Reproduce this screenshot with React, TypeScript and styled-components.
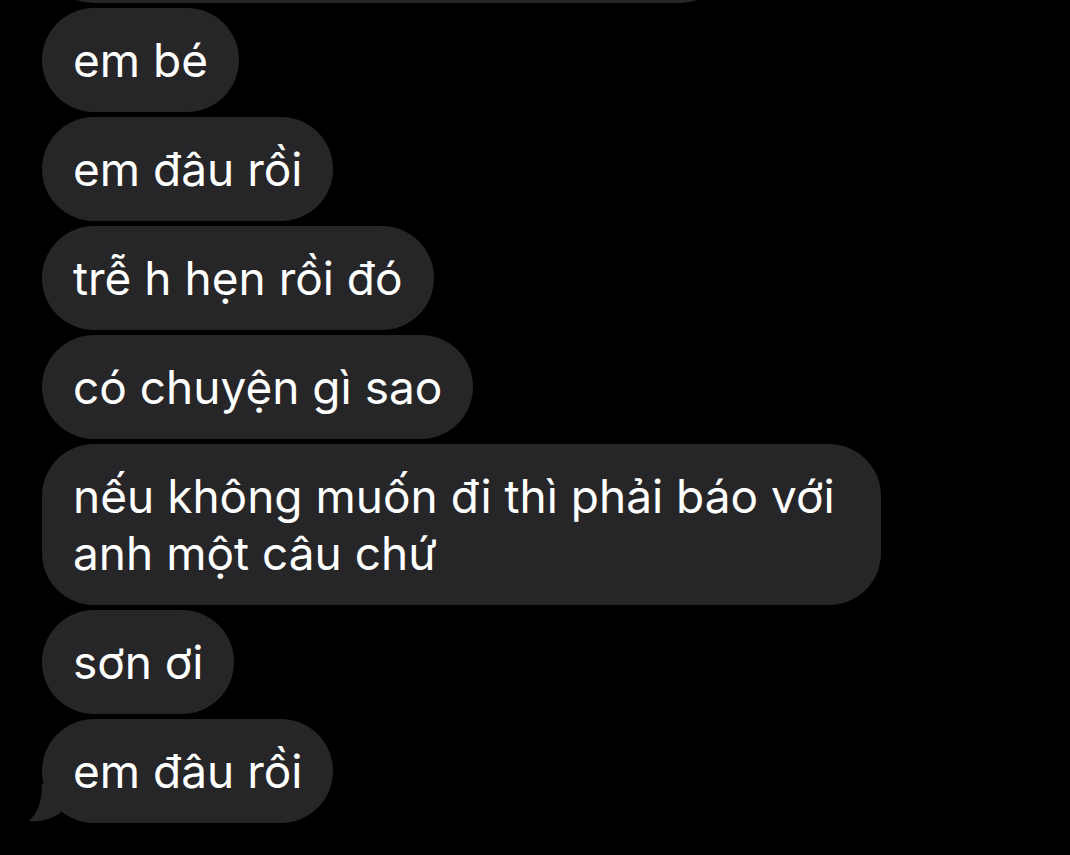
import styled, { createGlobalStyle } from "styled-components";

const GlobalStyle = createGlobalStyle`
    html, body {
        margin: 0;
        padding: 0;
        background: #000;
    }
    * {
        box-sizing: border-box;
    }
`

const messages = [
    "em bé",
    "em đâu rồi",
    "trễ h hẹn rồi đó",
    "có chuyện gì sao",
    "nếu không muốn đi thì phải báo với anh một câu chứ",
    "sơn ơi",
    "em đâu rồi",
]

const Tail = () => (
    <TailSvg width="44" height="44" viewBox="0 0 44 44">
        <path d="M14 4 C14 22 10 34 1 42 C12 43 24 40 32 34 L44 20 Z" fill="#262628"/>
    </TailSvg>
)

export default function App() {
    return (
        <>
            <GlobalStyle/>
            <Screen>
                <Thread>
                    {/* previous message, scrolled mostly out of view */}
                    <ScrolledBubble $width={690}/>
                    {messages.map((text, i) => {
                        const last = i === messages.length - 1
                        return (
                            <Bubble key={i}>
                                {text}
                                {last && <Tail/>}
                            </Bubble>
                        )
                    })}
                </Thread>
            </Screen>
        </>
    );
}

const Screen = styled.div`
    width: 1070px;
    height: 855px;
    overflow: hidden;
    background: #000;
    display: flex;
    flex-direction: column;
    justify-content: flex-end;
    padding: 0 0 32px 42px;
`

const Thread = styled.div`
    display: flex;
    flex-direction: column;
    align-items: flex-start;
    gap: 5px;
`

const Bubble = styled.div`
    position: relative;
    max-width: 839px;
    padding: 23.5px 31px;
    border-radius: 52px;
    background: #262628;
    color: #fff;
    font-family: Inter, "Noto Sans", sans-serif;
    font-size: 46px;
    line-height: 57px;
    -webkit-font-smoothing: antialiased;
`

const ScrolledBubble = styled.div<{ $width: number }>`
    width: ${p => p.$width}px;
    height: 104px;
    flex-shrink: 0;
    border-radius: 52px;
    background: #262628;
`

const TailSvg = styled.svg`
    position: absolute;
    left: -14px;
    bottom: 0;
    display: block;
`
